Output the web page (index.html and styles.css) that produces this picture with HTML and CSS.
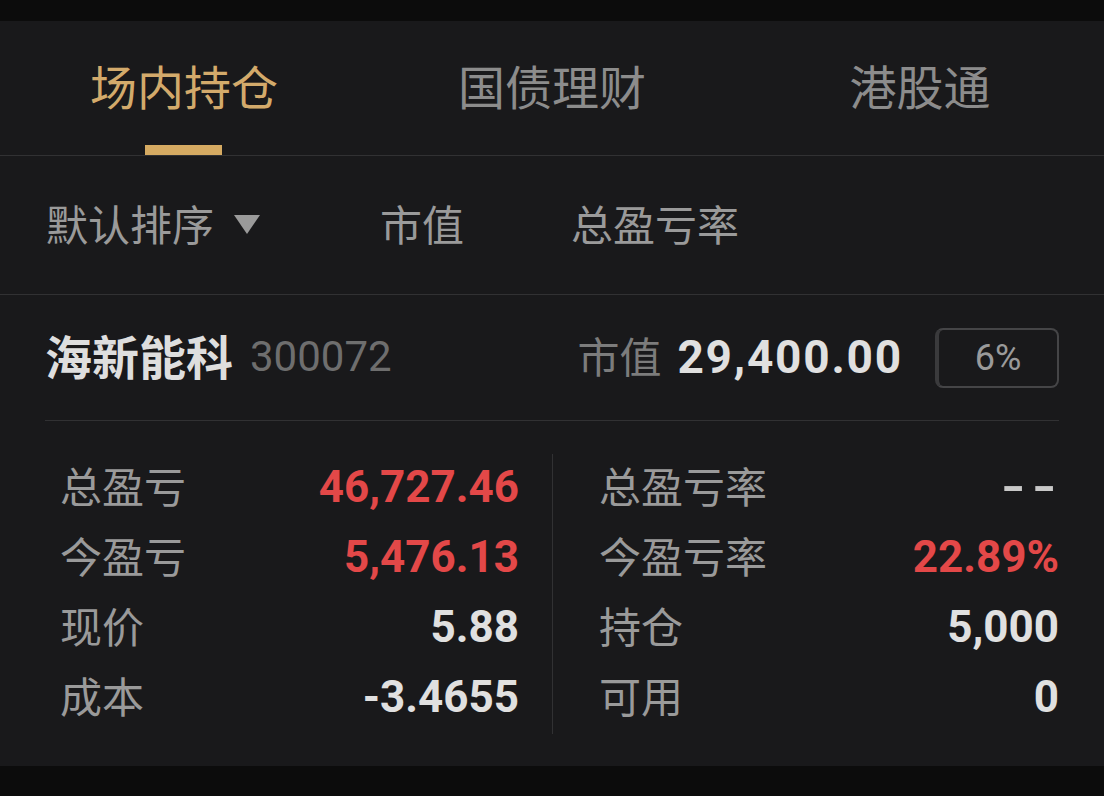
FILE: index.html
```html
<!DOCTYPE html>
<html lang="zh-CN">
<head>
  <meta charset="UTF-8" />
  <title>持仓</title>
  <meta name="viewport" content="width=device-width, initial-scale=1" />
  <link rel="stylesheet" href="styles.css">
</head>
<body>
  <div class="panel">
    <nav class="tabs">
      <div class="tab active">场内持仓</div>
      <div class="tab">国债理财</div>
      <div class="tab">港股通</div>
    </nav>

    <div class="sort-bar">
      <div class="sort-item sort-default">
        默认排序
        <span class="caret"></span>
      </div>
      <div class="sort-item sort-value">市值</div>
      <div class="sort-item sort-rate">总盈亏率</div>
    </div>

    <div class="holding">
      <div class="holding-head">
        <div class="stock">
          <span class="stock-name">海新能科</span>
          <span class="stock-code">300072</span>
        </div>
        <div class="market">
          <span class="market-label">市值</span>
          <span class="market-value">29,400.00</span>
          <span class="ratio">6%</span>
        </div>
      </div>

      <div class="holding-grid">
        <div class="col">
          <div class="row"><span class="label">总盈亏</span><span class="num up">46,727.46</span></div>
          <div class="row"><span class="label">今盈亏</span><span class="num up">5,476.13</span></div>
          <div class="row"><span class="label">现价</span><span class="num">5.88</span></div>
          <div class="row"><span class="label">成本</span><span class="num">-3.4655</span></div>
        </div>
        <div class="col col-right">
          <div class="row"><span class="label">总盈亏率</span><span class="num empty">--</span></div>
          <div class="row"><span class="label">今盈亏率</span><span class="num up">22.89%</span></div>
          <div class="row"><span class="label">持仓</span><span class="num">5,000</span></div>
          <div class="row"><span class="label">可用</span><span class="num">0</span></div>
        </div>
      </div>
    </div>
  </div>
</body>
</html>
```

FILE: styles.css
```css
* {
  box-sizing: border-box;
}

body {
  margin: 0;
  padding: 21px 0 30px;
  background: #0c0c0c;
  font-family: "Noto Sans CJK SC", "Noto Sans", sans-serif;
  color: #9a9a9a;
}

.panel {
  background: #19191b;
}

/* tabs */
.tabs {
  display: grid;
  grid-template-columns: repeat(3, 1fr);
  height: 135px;
  border-bottom: 1px solid #313133;
}

.tab {
  position: relative;
  display: flex;
  align-items: center;
  justify-content: center;
  padding-bottom: 8px;
  font-size: 47px;
  line-height: 1;
  color: #8c8c8c;
}

.tab.active {
  color: #d3aa6b;
}

.tab.active::after {
  content: "";
  position: absolute;
  left: 50%;
  bottom: 0;
  width: 77px;
  height: 10px;
  margin-left: -39px;
  background: #d5aa62;
}

/* sort bar */
.sort-bar {
  display: flex;
  align-items: center;
  height: 139px;
  padding: 0 0 6px 46px;
  border-bottom: 1px solid #313133;
  font-size: 42px;
  color: #9a9a9a;
}

.sort-default {
  display: flex;
  align-items: center;
  width: 334px;
}

.caret {
  width: 0;
  height: 0;
  margin-left: 20px;
  margin-top: 4px;
  border-left: 13px solid transparent;
  border-right: 13px solid transparent;
  border-top: 19px solid #9a9a9a;
}

.sort-value {
  width: 191px;
}

/* holding card */
.holding {
  padding: 0 45px;
}

.holding-head {
  display: flex;
  align-items: center;
  justify-content: space-between;
  height: 126px;
  padding-bottom: 6px;
  border-bottom: 1px solid #313133;
}

.stock {
  display: flex;
  align-items: center;
  gap: 17px;
}

.stock-name {
  font-size: 47px;
  font-weight: 700;
  color: #dedede;
}

.stock-code {
  font-family: Roboto, sans-serif;
  font-size: 42px;
  color: #6e6e6e;
  margin-top: 4px;
}

.market {
  display: flex;
  align-items: center;
}

.market-label {
  font-size: 42px;
  color: #7c7c7c;
}

.market-value {
  margin-left: 16px;
  margin-top: 4px;
  font-family: Roboto, sans-serif;
  font-weight: 700;
  font-size: 46px;
  letter-spacing: 1.8px;
  color: #e0e0e0;
}

.ratio {
  display: flex;
  align-items: center;
  justify-content: center;
  width: 124px;
  height: 60px;
  margin-left: 32px;
  margin-top: 6px;
  border: 2px solid #454547;
  border-left: 4px solid #3a3a3c;
  border-radius: 8px;
  font-family: Roboto, sans-serif;
  font-size: 36px;
  color: #9a9a9a;
}

.holding-grid {
  display: grid;
  grid-template-columns: 1fr 1fr;
  padding: 33px 0 32px;
}

.col {
  padding: 0 33px 0 15px;
}

.col-right {
  border-left: 1px solid #313133;
  padding: 0 0 0 46px;
}

.row {
  display: flex;
  align-items: center;
  justify-content: space-between;
  height: 70px;
}

.label {
  font-size: 42px;
  color: #9a9a9a;
  margin-top: -10px;
}

.num {
  font-family: Roboto, sans-serif;
  font-weight: 700;
  font-size: 44px;
  color: #e0e0e0;
  margin-top: -4px;
}

.num.up {
  color: #e34848;
}

.num.empty {
  letter-spacing: 4px;
  margin-right: -4px;
  transform: scaleX(1.45);
  transform-origin: right center;
  color: #c8c8c8;
}
```
